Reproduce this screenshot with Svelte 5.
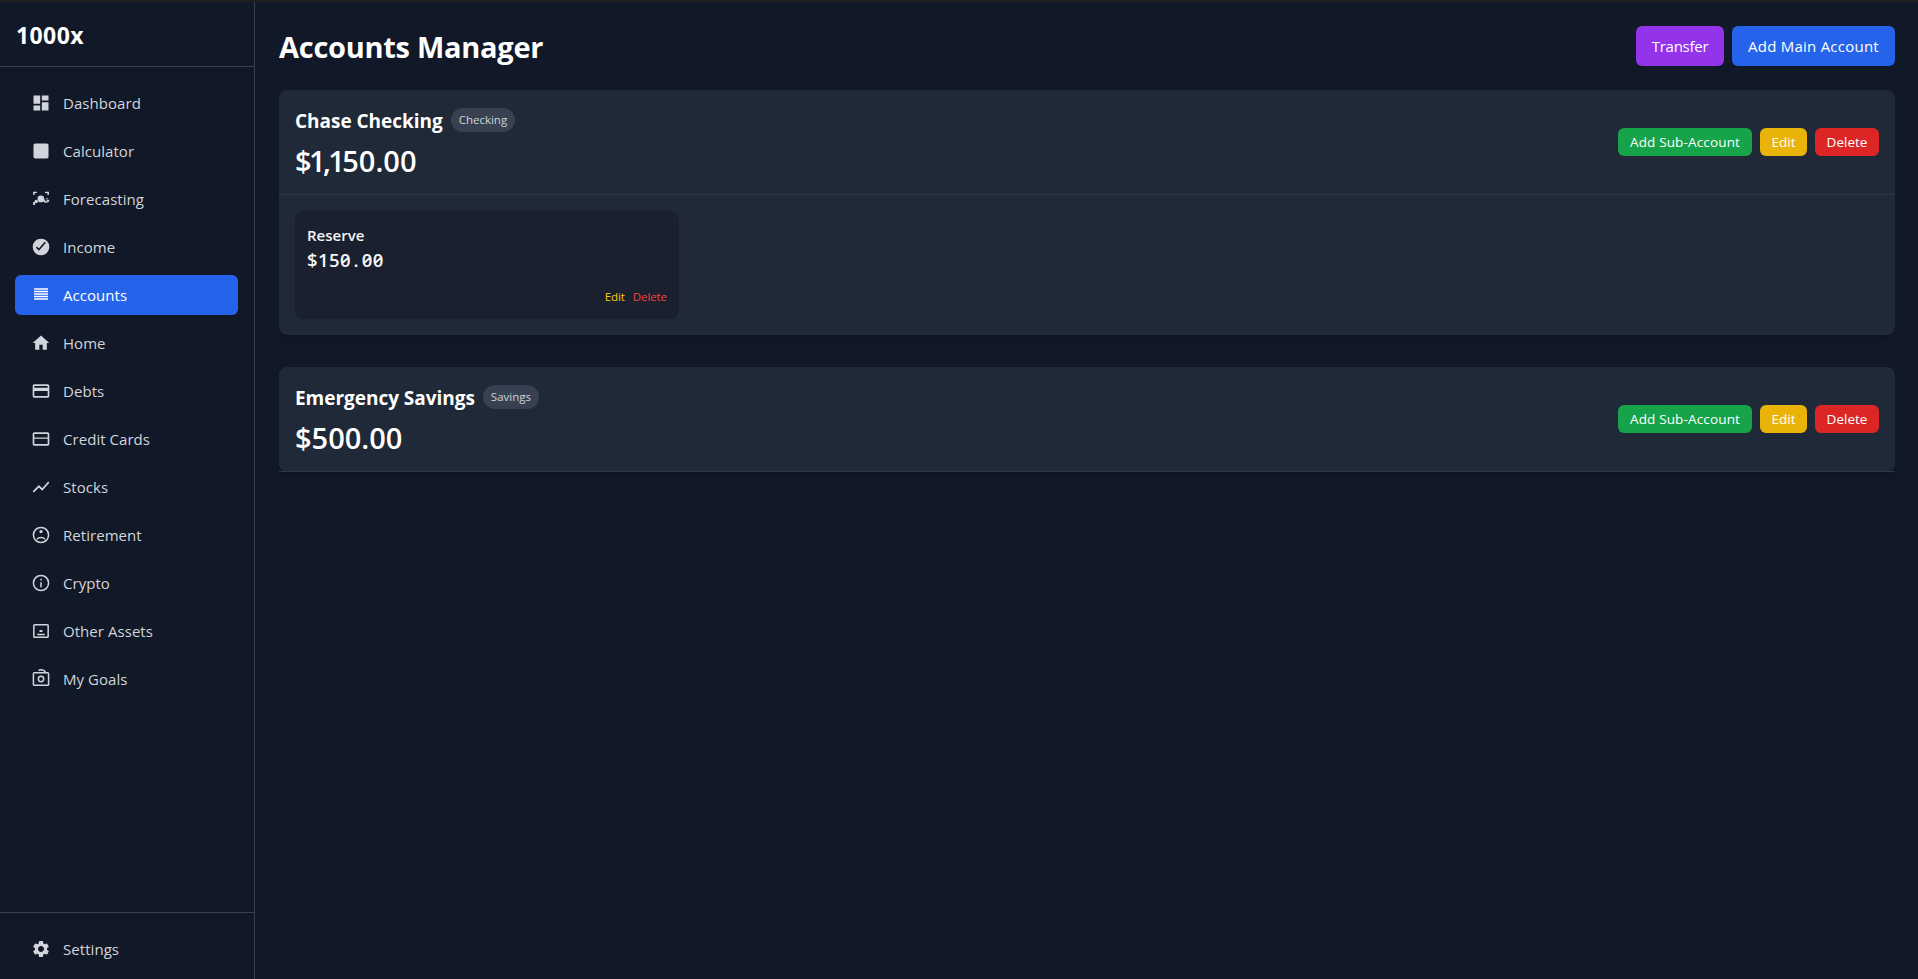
<script>
  const nav = [
    { id: 'dashboard', label: 'Dashboard' },
    { id: 'calculator', label: 'Calculator' },
    { id: 'forecasting', label: 'Forecasting' },
    { id: 'income', label: 'Income' },
    { id: 'accounts', label: 'Accounts' },
    { id: 'home', label: 'Home' },
    { id: 'debts', label: 'Debts' },
    { id: 'cards', label: 'Credit Cards' },
    { id: 'stocks', label: 'Stocks' },
    { id: 'retirement', label: 'Retirement' },
    { id: 'crypto', label: 'Crypto' },
    { id: 'assets', label: 'Other Assets' },
    { id: 'goals', label: 'My Goals' }
  ];
  const active = 'accounts';

  const accounts = [
    {
      name: 'Chase Checking',
      type: 'Checking',
      balance: ['$1,1', '50.00'],
      subs: [{ name: 'Reserve', whole: '$150', cents: '00' }]
    },
    { name: 'Emergency Savings', type: 'Savings', balance: ['', '$500.00'], subs: [] }
  ];
</script>

{#snippet icon(id)}
  <svg class="icon" viewBox="0 0 24 24" aria-hidden="true">
    {#if id === 'dashboard'}
      <path d="M3 13h8V3H3v10zm0 8h8v-6H3v6zm10 0h8V11h-8v10zm0-18v6h8V3h-8z" />
    {:else if id === 'calculator'}
      <path d="M19 3H5c-1.1 0-2 .9-2 2v14c0 1.1.9 2 2 2h14c1.1 0 2-.9 2-2V5c0-1.1-.9-2-2-2z" />
    {:else if id === 'forecasting'}
      <path d="M2.5 3.2h4.7v1.6H4.3v2.4H2.5zM21.5 3.2h-4.7v1.6h2.9v2.4h1.8z" />
      <circle cx="11.8" cy="11.9" r="4" />
      <path d="M2.600 15.500h2.200v3.600H2.600z" />
      <circle cx="6.200" cy="15" r="2" />
      <path d="M13.500 12.500h3.200c0 1.700.8 2.600 2 2.600V13h1.500v2.600c-.5 1-1.500 1.200-2.700.9-1.500-.3-3.100-1.400-4-4zM18.200 11h1.800v1.200h-1.800zM20.300 12.800h1.500v2.400h-1.500z" />
    {:else if id === 'income'}
      <circle cx="12" cy="12" r="10" />
      <path class="cut" d="M6.500 12.200l3 2.900 7.700-8.900" />
    {:else if id === 'accounts'}
      <path d="M3.600 3.800h16.800v1.800H3.600zm0 3h16.800v1.800H3.600zm0 3h16.800v1.800H3.600zm0 3h16.800v1.800H3.600zm0 3h16.800v1.800H3.600z" />
    {:else if id === 'home'}
      <path d="M10 20v-6h4v6h5v-8h3L12 3 2 12h3v8z" />
    {:else if id === 'debts'}
      <path d="M20 4H4c-1.110 0-1.990.89-1.990 2L2 18c0 1.110.89 2 2 2h16c1.110 0 2-.89 2-2V6c0-1.110-.89-2-2-2zm0 14H4v-6h16v6zm0-10H4V6h16v2z" />
    {:else if id === 'cards'}
      <path d="M20 4H4c-1.110 0-2 .89-2 2v12c0 1.110.89 2 2 2h16c1.110 0 2-.89 2-2V6c0-1.110-.89-2-2-2zm0 14H4v-6.200h16V18zm0-7.900H4V6h16v4.100z" />
    {:else if id === 'stocks'}
      <path d="M3.500 18.490l6-6.010 4 4L22 6.920l-1.410-1.410-7.090 7.970-4-4L2 16.990z" />
    {:else if id === 'retirement'}
      <circle class="line" cx="12" cy="12" r="9.100" />
      <circle cx="12" cy="7.900" r="2" />
      <path d="M6.500 16.800c1.200-1.900 3.300-2.700 5.500-2.700s4.300.8 5.500 2.700l-1.300 1c-1.200-1.300-2.600-1.800-4.200-1.800s-3 .5-4.200 1.800z" />
    {:else if id === 'crypto'}
      <circle class="line" cx="12" cy="12" r="9.100" />
      <path d="M11.100 7h1.800v2h-1.800zM11.100 11h1.800v6h-1.800z" />
    {:else if id === 'assets'}
      <rect class="line" x="3.400" y="4.400" width="17.200" height="15.200" rx="1" />
      <path d="M10.200 10.800h3.600v2.400h-3.600zM7.500 15.200h9V17h-9z" />
    {:else if id === 'goals'}
      <rect class="line" x="2.900" y="4.600" width="18.200" height="15" rx="1" />
      <circle class="line" cx="12" cy="12" r="3.200" />
      <path class="line" d="M9 1.800c3.200-1.700 7-.8 8.600 2.600" />
    {:else if id === 'settings'}
      <path d="M19.140 12.940c.04-.3.06-.61.06-.94 0-.32-.02-.64-.07-.94l2.030-1.580c.18-.14.23-.41.12-.61l-1.920-3.320c-.12-.22-.37-.29-.59-.22l-2.390.96c-.5-.38-1.030-.7-1.620-.94l-.36-2.540c-.04-.24-.24-.41-.48-.41h-3.840c-.24 0-.43.17-.47.41l-.36 2.540c-.59.24-1.130.57-1.620.94l-2.390-.96c-.22-.08-.47 0-.59.22L2.740 8.870c-.12.21-.08.47.12.61l2.030 1.580c-.05.3-.09.63-.09.94s.02.64.07.94l-2.030 1.580c-.18.14-.23.41-.12.61l1.920 3.320c.12.22.37.29.59.22l2.390-.96c.5.38 1.030.7 1.620.94l.36 2.540c.05.24.24.41.48.41h3.840c.24 0 .44-.17.47-.41l.36-2.540c.59-.24 1.130-.56 1.620-.94l2.390.96c.22.08.47 0 .59-.22l1.920-3.320c.12-.22.07-.47-.12-.61l-2.010-1.580zM12 15.600c-1.980 0-3.600-1.620-3.600-3.600s1.620-3.600 3.600-3.600 3.600 1.620 3.600 3.600-1.620 3.600-3.600 3.600z" />
    {/if}
  </svg>
{/snippet}

<div class="app">
  <aside class="sidebar">
    <div class="brand">1000x</div>
    <nav>
      {#each nav as item}
        <a class="item" class:active={item.id === active}>
          {@render icon(item.id)}
          <span>{item.label}</span>
        </a>
      {/each}
    </nav>
    <div class="foot">
      <a class="item">
        {@render icon('settings')}
        <span>Settings</span>
      </a>
    </div>
  </aside>

  <main>
    <header class="top">
      <h1>Accounts Manager</h1>
      <div class="actions">
        <button class="btn transfer">Transfer</button>
        <button class="btn add">Add Main Account</button>
      </div>
    </header>

    {#each accounts as acc}
      <section class="card">
        <div class="card-head">
          <div>
            <div class="title">
              <h2>{acc.name}</h2>
              <span class="badge">{acc.type}</span>
            </div>
            <p class="balance"><span class="tight">{acc.balance[0]}</span>{acc.balance[1]}</p>
          </div>
          <div class="actions">
            <button class="small sub-add">Add Sub-Account</button>
            <button class="small edit">Edit</button>
            <button class="small delete">Delete</button>
          </div>
        </div>
        {#if acc.subs.length}
          <div class="subs">
            {#each acc.subs as sub}
              <div class="sub">
                <h3>{sub.name}</h3>
                <p class="amount">{sub.whole}<span class="point">.</span>{sub.cents}</p>
                <div class="links">
                  <button class="link yellow">Edit</button>
                  <button class="link red">Delete</button>
                </div>
              </div>
            {/each}
          </div>
        {/if}
      </section>
    {/each}
  </main>
</div>

<style>
  :global(body) {
    margin: 0;
    background: #111827;
    overflow: hidden;
  }
  * {
    box-sizing: border-box;
  }
  h1, h2, h3, p {
    margin: 0;
  }
  button {
    border: 0;
    padding: 0;
    background: none;
    font-family: inherit;
    color: #fff;
    white-space: nowrap;
  }
  .app {
    display: flex;
    height: 979px;
    overflow: hidden;
    border-top: 2px solid #1f1f1f;
    background: #111827;
    color: #fff;
    font-family: 'Open Sans', 'Noto Sans', sans-serif;
  }
  .sidebar {
    display: flex;
    flex-direction: column;
    flex: none;
    width: 255px;
    border-right: 1px solid #374151;
  }
  .brand {
    flex: none;
    height: 65px;
    padding: 17px 16px 15px;
    border-bottom: 1px solid #374151;
    font-size: 23px;
    font-weight: 700;
    line-height: 32px;
    letter-spacing: 0.4px;
  }
  nav {
    display: flex;
    flex-direction: column;
    flex: 1;
    gap: 8px;
    padding: 16px 16px 0 15px;
  }
  .item {
    display: flex;
    align-items: center;
    gap: 12px;
    height: 40px;
    padding: 0 16px;
    border-radius: 6px;
    color: #d1d5db;
    font-size: 15px;
    line-height: 24px;
    letter-spacing: 0.05px;
  }
  .item.active {
    background: #2563eb;
    color: #fff;
  }
  .icon {
    flex: none;
    width: 20px;
    height: 20px;
    fill: currentColor;
  }
  .line {
    fill: none;
    stroke: currentColor;
    stroke-width: 1.8;
  }
  .cut {
    fill: none;
    stroke: #111827;
    stroke-width: 1.9;
  }
  .foot {
    flex: none;
    height: 67px;
    padding: 16px 16px 0 15px;
    border-top: 1px solid #374151;
  }
  main {
    flex: 1;
    padding: 24px 23px 0 24px;
  }
  .top {
    display: flex;
    align-items: center;
    justify-content: space-between;
    height: 40px;
    margin-bottom: 24px;
  }
  h1 {
    padding-top: 1px;
    font-size: 29px;
    line-height: 36px;
    font-weight: 700;
    letter-spacing: -0.27px;
  }
  .actions {
    display: flex;
    gap: 8px;
  }
  .btn {
    height: 40px;
    border-radius: 6px;
    font-size: 15px;
    line-height: 24px;
  }
  .transfer {
    width: 88px;
    background: #9333ea;
    letter-spacing: -0.25px;
  }
  .add {
    width: 163px;
    background: #2563eb;
    letter-spacing: 0.24px;
  }
  .card {
    margin-bottom: 32px;
    border-radius: 8px;
    background: #1f2937;
    box-shadow: 0 4px 6px -1px rgba(0, 0, 0, 0.1), 0 2px 4px -2px rgba(0, 0, 0, 0.1);
  }
  .card-head {
    display: flex;
    align-items: center;
    justify-content: space-between;
    height: 105px;
    padding: 16px;
    border-bottom: 1px solid #2c3645;
  }
  .title {
    display: flex;
    align-items: center;
    gap: 8px;
    height: 28px;
  }
  h2 {
    padding-top: 2px;
    font-size: 19px;
    line-height: 26px;
    font-weight: 700;
    letter-spacing: -0.03px;
  }
  .badge {
    height: 24px;
    padding: 4px 8px;
    border-radius: 12px;
    background: #374151;
    color: #d1d5db;
    font-size: 11.5px;
    line-height: 16px;
  }
  .balance {
    padding-top: 9px;
    font-size: 29px;
    line-height: 35px;
    font-weight: 600;
  }
  .tight {
    letter-spacing: -2.6px;
  }
  .small {
    height: 28px;
    border-radius: 6px;
    font-size: 13.5px;
    line-height: 20px;
  }
  .sub-add {
    width: 134px;
    background: #16a34a;
    letter-spacing: 0.15px;
  }
  .edit {
    width: 47px;
    background: #eab308;
  }
  .delete {
    width: 64px;
    background: #dc2626;
  }
  .subs {
    display: grid;
    grid-template-columns: repeat(4, 1fr);
    gap: 16px;
    padding: 16px;
  }
  .sub {
    height: 108px;
    padding: 12px;
    border-radius: 8px;
    background: #1a202e;
    color: #f3f4f6;
  }
  h3 {
    font-size: 15px;
    line-height: 24px;
    font-weight: 600;
  }
  .amount {
    font-size: 18.5px;
    line-height: 26px;
    font-weight: 600;
    letter-spacing: 0.42px;
    font-feature-settings: 'zero';
  }
  .point {
    padding: 0 2.6px;
  }
  .links {
    display: flex;
    justify-content: flex-end;
    gap: 8px;
    margin-top: 16px;
  }
  .link {
    font-size: 11.5px;
    line-height: 16px;
    letter-spacing: -0.08px;
  }
  .yellow {
    color: #facc15;
  }
  .red {
    color: #ef4444;
  }
</style>
